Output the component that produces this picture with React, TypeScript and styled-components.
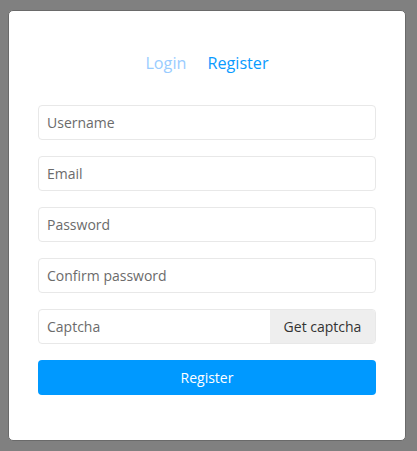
import React from "react";
import styled, { createGlobalStyle } from "styled-components";

const Global = createGlobalStyle`
  html, body { margin: 0; padding: 0; background: #808080; }
  body { font-family: "Open Sans", "Noto Sans", sans-serif; }
  * { box-sizing: border-box; }
`;

const Page = styled.div`
  padding: 10px 11px 10px 8px;
`;

const Card = styled.div`
  width: 398px;
  height: 431px;
  background: #ffffff;
  border: 1px solid #6a6a6a;
  border-radius: 5px;
  padding: 40px 29px 0 29px;
  display: flex;
  flex-direction: column;
`;

const Tabs = styled.div`
  display: flex;
  justify-content: center;
  gap: 21px;
  height: 24px;
  align-items: center;
  margin-bottom: 30px;
`;

const Tab = styled.span<{ $active?: boolean }>`
  font-size: 16.2px;
  color: ${(p) => (p.$active ? "#0a9bff" : "#99ccff")};
  cursor: pointer;
`;

const Form = styled.div`
  display: flex;
  flex-direction: column;
  gap: 16px;
`;

const Field = styled.div`
  display: flex;
  height: 35px;
  border: 1px solid #e8e8e8;
  border-radius: 4px;
  overflow: hidden;
  background: #fff;
`;

const Input = styled.input`
  flex: 1;
  min-width: 0;
  border: none;
  outline: none;
  padding: 0 8px;
  font-family: inherit;
  font-size: 14px;
  color: #333;
  background: transparent;
  &::placeholder { color: #6b6b6b; }
`;

const Addon = styled.button`
  width: 105px;
  border: none;
  background: #eeeeee;
  font-family: inherit;
  font-size: 14px;
  color: #333;
  cursor: pointer;
`;

const Submit = styled.button`
  height: 35px;
  border: none;
  border-radius: 4px;
  background: #0099ff;
  color: #fff;
  font-family: inherit;
  font-size: 14px;
  cursor: pointer;
`;

export default function App() {
  return (
    <>
      <Global />
      <Page>
        <Card>
          <Tabs>
            <Tab>Login</Tab>
            <Tab $active>Register</Tab>
          </Tabs>
          <Form>
            <Field><Input placeholder="Username" /></Field>
            <Field><Input placeholder="Email" /></Field>
            <Field><Input type="password" placeholder="Password" /></Field>
            <Field><Input type="password" placeholder="Confirm password" /></Field>
            <Field>
              <Input placeholder="Captcha" />
              <Addon>Get captcha</Addon>
            </Field>
            <Submit>Register</Submit>
          </Form>
        </Card>
      </Page>
    </>
  );
}
